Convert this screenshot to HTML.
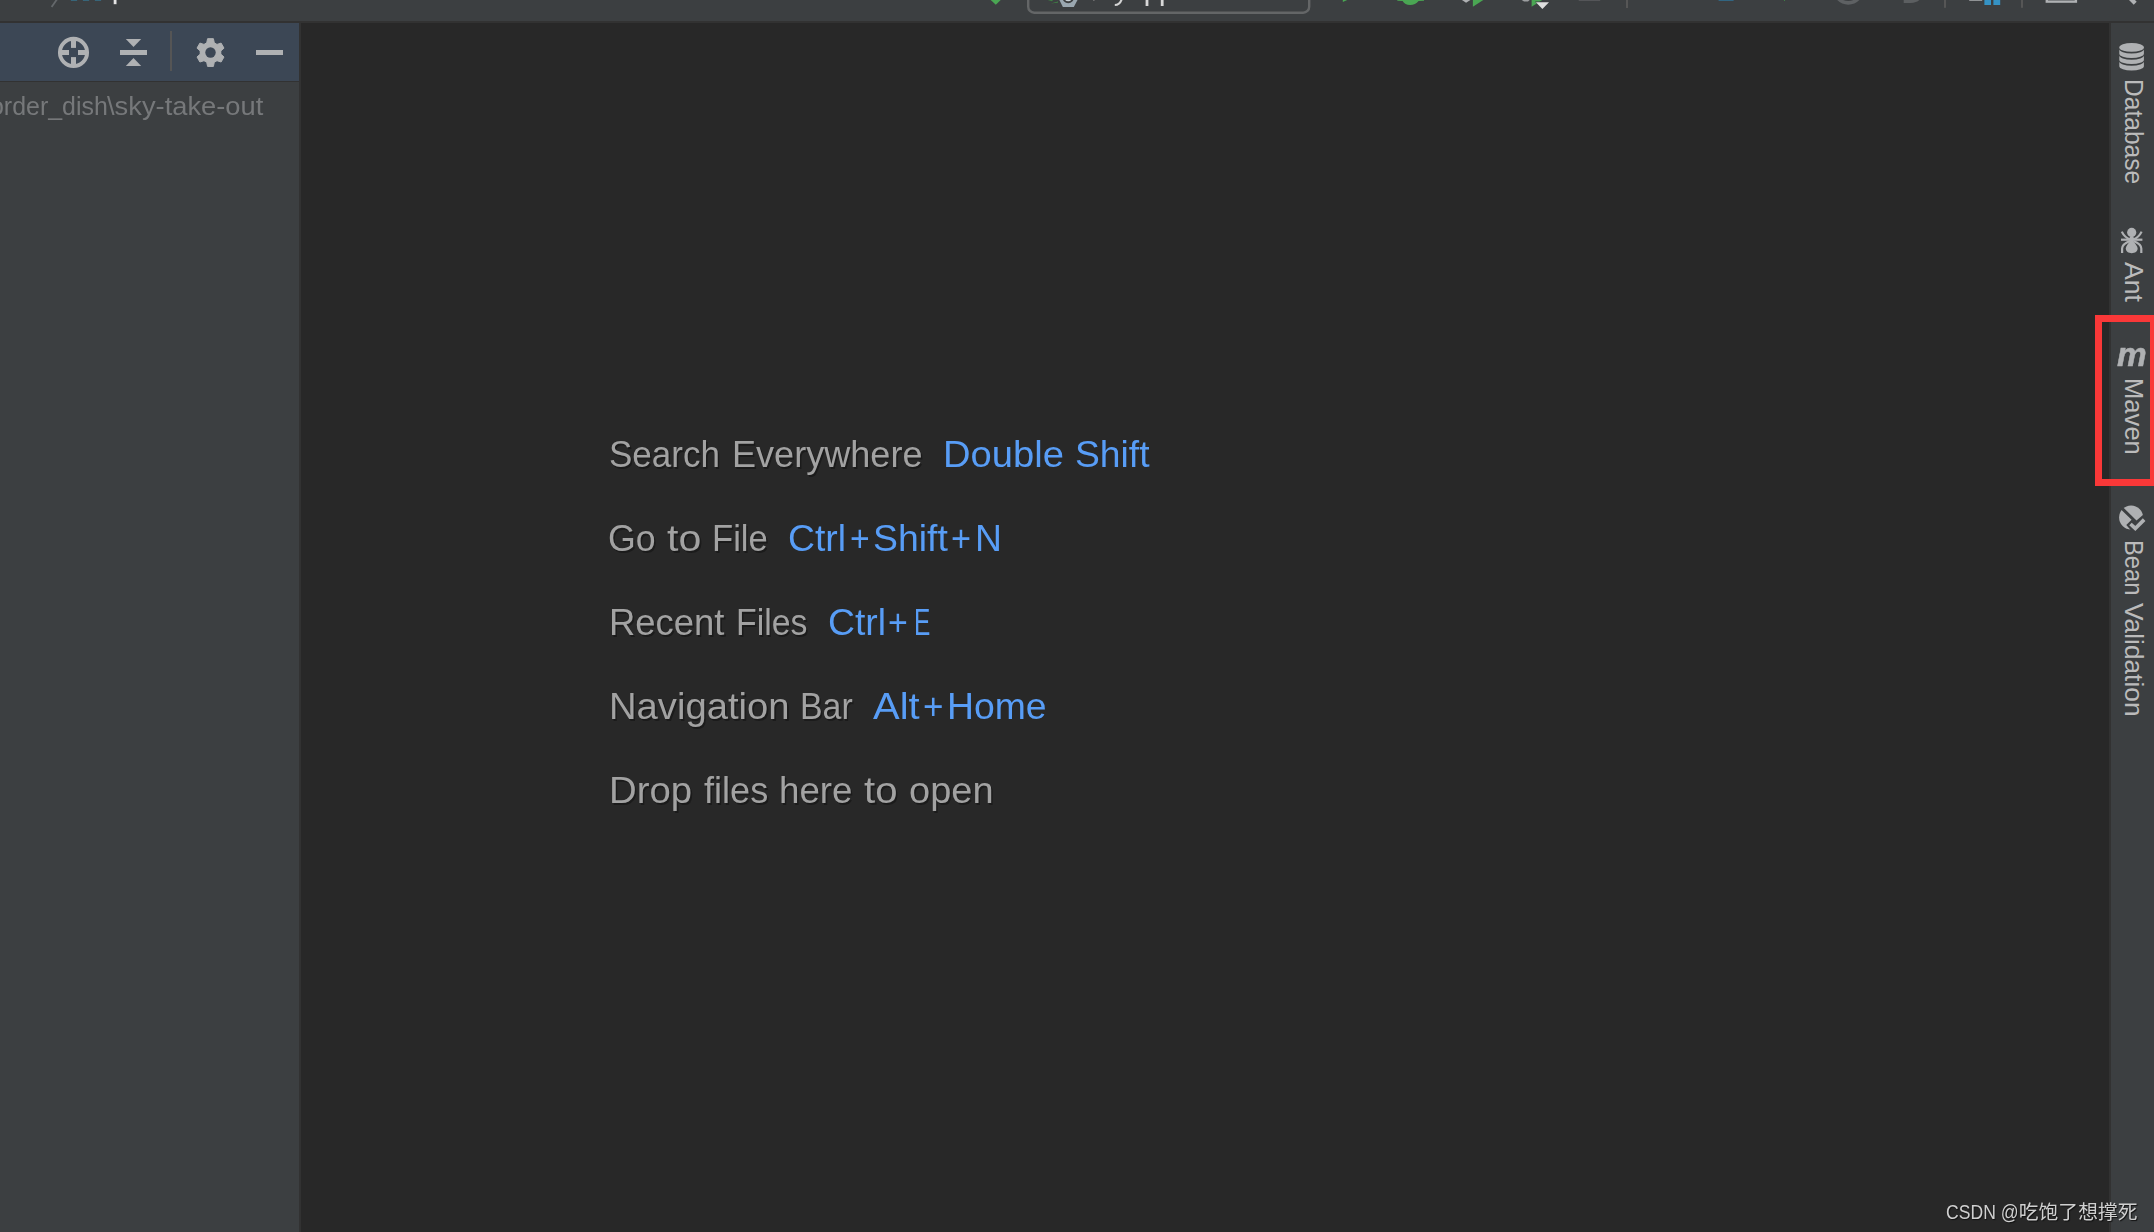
<!DOCTYPE html>
<html lang="en">
<head>
<meta charset="utf-8">
<title>IDE - Maven tool window</title>
<style>
html,body{margin:0;padding:0;}
body{width:2154px;height:1232px;background:#282828;position:relative;overflow:hidden;
  font-family:"Liberation Sans","Noto Sans CJK SC",sans-serif;}
.abs{position:absolute;}
#topbar{left:0;top:0;width:2154px;height:21px;background:#3c3f41;overflow:hidden;}
#topline{left:0;top:21px;width:2154px;height:2px;background:#323232;}
#side{left:0;top:23px;width:299px;height:1209px;background:#3c3f41;overflow:hidden;}
#sidehead{left:0;top:0;width:299px;height:58px;background:#3c4755;}
#sideheadline{left:0;top:58px;width:299px;height:1px;background:#323232;}
#sideborder{left:299px;top:23px;width:2px;height:1209px;background:#323232;}
#stripeborder{left:2109px;top:23px;width:2px;height:1209px;background:#323232;}
#stripe{left:2111px;top:23px;width:43px;height:1209px;background:#3c3f41;}
/* center hints */
.hint{position:absolute;white-space:nowrap;font-size:36px;line-height:40px;height:40px;color:#a2a2a2;
  text-shadow:1.5px 1.5px 0 #1b1b1b;transform-origin:0 0;}
.key{color:#589df6;text-shadow:none;}
/* vertical stripe labels */
.vt{position:absolute;white-space:nowrap;font-size:26px;line-height:32px;height:32px;color:#bbbbbb;
  transform-origin:0 0;transform:rotate(90deg);}
</style>
</head>
<body>
<div id="topbar" class="abs">
<svg class="abs" style="left:0;top:0;" width="2154" height="21" viewBox="0 0 2154 21">
<!-- left fragments -->
<path d="M57.2,-1 L51.6,7" stroke="#64686b" stroke-width="1.8" fill="none"/>
<rect x="70.9" y="0" width="6.2" height="0.9" fill="#376a80"/>
<rect x="82.9" y="0" width="6.2" height="0.9" fill="#376a80"/>
<rect x="94.9" y="0" width="6.2" height="0.9" fill="#376a80"/>
<rect x="113.2" y="0" width="3.8" height="4.3" fill="#6a6d70"/><rect x="113.9" y="0" width="2.4" height="4.1" fill="#e4e4e4"/>
<!-- build hammer tip -->
<path d="M990.7,0 L1000.7,0 L995.8,4.7Z" fill="#4aa653"/>
<!-- run configuration combo -->
<rect x="1028.2" y="-12" width="281" height="24.7" rx="6" ry="6" fill="none" stroke="#646667" stroke-width="2.4"/>
<path d="M1047.8,0 L1053,0.2 L1052,1.2Z M1051,3.6 L1058,1.4 L1058,2.6Z" fill="#3f8f45"/>
<path d="M1059.4,0 L1062.9,7 L1073.8,7 L1077.5,0Z" fill="#9aa7b0"/>
<circle cx="1068.2" cy="-2.6" r="4.8" fill="#c9d0d5" stroke="#3c3f41" stroke-width="2"/>
<rect x="1093" y="0" width="1.6" height="0.8" fill="#777"/>
<path d="M1121.8,-1 C1120.5,3 1118.5,5 1114.8,5" stroke="#d4d4d4" stroke-width="2.1" fill="none"/>
<rect x="1145.6" y="0" width="2.8" height="6" fill="#d8d8d8"/>
<rect x="1160.8" y="0" width="2.8" height="6" fill="#d8d8d8"/>
<!-- run/debug icons bottoms -->
<path d="M1342.8,0 L1347.2,0 L1342.8,2.1Z" fill="#4aa653"/>
<path d="M1397.3,0 L1424,0 L1424,0.8 L1418.6,0.9 C1416.5,3.6 1413.6,4.9 1410.1,4.9 C1406.6,4.9 1404.2,3.6 1402.6,0.9 L1397.3,0.8Z" fill="#4aa653"/>
<path d="M1461.9,0 L1470.4,0 L1466.1,2.7Z" fill="#afb1b3"/>
<path d="M1472.9,0 L1483.3,0 L1472.9,6.7Z" fill="#4aa653"/>
<path d="M1521.7,0 L1529.7,0 L1528,1.5 L1524,1.5Z" fill="#9c9ea0"/>
<path d="M1531.6,0 L1542.2,0 L1531.6,6.7Z" fill="#4aa653"/>
<path d="M1535.0,1.6 L1549.8,1.6 L1542.4,9.6Z" fill="#3c3f41"/>
<path d="M1535.9,2.3 L1549.0,2.3 L1542.4,8.9Z" fill="#dedede"/>
<rect x="1578.7" y="0" width="21.5" height="0.8" fill="#5a5c5e"/>
<rect x="1626" y="0" width="2" height="8" fill="#565656"/>
<rect x="1718.6" y="0" width="15" height="0.8" fill="#2f7091"/>
<rect x="1784" y="0" width="1" height="0.8" fill="#3f8f45"/>
<!-- stop (disabled) etc -->
<circle cx="1848.3" cy="-11" r="13.9" fill="none" stroke="#5e6163" stroke-width="3.6"/>
<path d="M1903.7,0 L1903.7,2.9 L1910.5,2.9 C1914.5,2.9 1917.8,1.8 1919.3,0Z" fill="#5c5f61"/>
<rect x="1944" y="0" width="2" height="7.8" fill="#565656"/>
<rect x="1969.2" y="0" width="13" height="0.9" fill="#9a9da0"/>
<rect x="1984.4" y="0" width="6.6" height="5" fill="#3592c4"/>
<rect x="1993.4" y="0" width="6.8" height="5" fill="#3592c4"/>
<rect x="2021" y="0" width="2" height="7.8" fill="#565656"/>
<rect x="2045.6" y="0" width="31.5" height="2.8" fill="#afb1b3"/>
<rect x="2048" y="0" width="26.7" height="0.9" fill="#777a7c"/>
<path d="M2127,-5 L2135.2,3.2" stroke="#afb1b3" stroke-width="4.2" fill="none"/>
</svg>
</div>
<div id="topline" class="abs"></div>
<div id="side" class="abs">
  <div id="sidehead" class="abs"></div>
  <div id="sideheadline" class="abs"></div>
</div>
<div id="sideborder" class="abs"></div>
<div id="stripeborder" class="abs"></div>
<div id="stripe" class="abs"></div>
<div id="hints">
<div class="hint" style="left:608.7px;top:433.5px;transform:scale(0.9730,1.03);">Search</div>
<div class="hint" style="left:731.7px;top:433.5px;transform:scale(1.0021,1.03);">Everywhere</div>
<div class="hint key" style="left:943.2px;top:433.5px;transform:scale(1.0595,1.03);">Double</div>
<div class="hint key" style="left:1075.2px;top:433.5px;transform:scale(1.0352,1.03);">Shift</div>

<div class="hint" style="left:608.3px;top:517.5px;transform:scale(0.9935,1.03);">Go</div>
<div class="hint" style="left:666.8px;top:517.5px;transform:scale(1.1414,1.03);">to</div>
<div class="hint" style="left:712.3px;top:517.5px;transform:scale(0.9618,1.03);">File</div>
<div class="hint key" style="left:788.3px;top:517.5px;transform:scale(1.0377,1.03);">Ctrl</div>
<div class="hint key" style="left:849.6px;top:517.5px;transform:scale(0.9368,1.03);">+</div>
<div class="hint key" style="left:873.1px;top:517.5px;transform:scale(1.0380,1.03);">Shift</div>
<div class="hint key" style="left:951.3px;top:517.5px;transform:scale(0.9526,1.03);">+</div>
<div class="hint key" style="left:975.2px;top:517.5px;transform:scale(1.0364,1.03);">N</div>

<div class="hint" style="left:609.0px;top:601.5px;transform:scale(1.0125,1.03);">Recent</div>
<div class="hint" style="left:735.5px;top:601.5px;transform:scale(0.9397,1.03);">Files</div>
<div class="hint key" style="left:827.7px;top:601.5px;transform:scale(1.0377,1.03);">Ctrl</div>
<div class="hint key" style="left:888.4px;top:601.5px;transform:scale(0.9421,1.03);">+</div>
<div class="hint key" style="left:913.5px;top:601.5px;transform:scale(0.6810,1.03);">E</div>

<div class="hint" style="left:608.9px;top:685.5px;transform:scale(1.0614,1.03);">Navigation</div>
<div class="hint" style="left:800.3px;top:685.5px;transform:scale(0.9407,1.03);">Bar</div>
<div class="hint key" style="left:872.6px;top:685.5px;transform:scale(1.1095,1.03);">Alt</div>
<div class="hint key" style="left:922.5px;top:685.5px;transform:scale(0.9737,1.03);">+</div>
<div class="hint key" style="left:947.4px;top:685.5px;transform:scale(1.0376,1.03);">Home</div>

<div class="hint" style="left:609.0px;top:769.5px;transform:scale(1.0653,1.03);">Drop</div>
<div class="hint" style="left:703.6px;top:769.5px;transform:scale(1.0032,1.03);">files</div>
<div class="hint" style="left:779.1px;top:769.5px;transform:scale(1.0203,1.03);">here</div>
<div class="hint" style="left:863.9px;top:769.5px;transform:scale(1.1138,1.03);">to</div>
<div class="hint" style="left:909.4px;top:769.5px;transform:scale(1.0558,1.03);">open</div>
</div>
<svg class="abs" style="left:0;top:23px;" width="299" height="58" viewBox="0 23 299 58">
<g fill="#afb1b3" stroke="none">
<!-- locate -->
<circle cx="73.5" cy="52.4" r="13.6" fill="none" stroke="#afb1b3" stroke-width="3.9"/>
<rect x="71" y="38.5" width="5" height="9.4"/>
<rect x="71" y="57.1" width="5" height="9.4"/>
<rect x="59.5" y="50" width="9.5" height="5"/>
<rect x="78" y="50" width="9.5" height="5"/>
<!-- collapse -->
<rect x="120" y="50" width="27" height="5"/>
<path d="M125.8,39.1 L141.2,39.1 L133.5,47.1Z"/>
<path d="M125.8,66 L141.2,66 L133.5,58Z"/>
<!-- gear -->
<path fill-rule="evenodd" stroke="#afb1b3" stroke-width="1.0" stroke-linejoin="round" d="M206.70,42.86 L207.60,38.65 L213.40,38.65 L214.30,42.86 L216.99,44.41 L221.09,43.09 L223.99,48.11 L220.79,51.00 L220.79,54.10 L223.99,56.99 L221.09,62.01 L216.99,60.69 L214.30,62.24 L213.40,66.45 L207.60,66.45 L206.70,62.24 L204.01,60.69 L199.91,62.01 L197.01,56.99 L200.21,54.10 L200.21,51.00 L197.01,48.11 L199.91,43.09 L204.01,44.41Z"/>
<circle cx="210.5" cy="52.55" r="10.3"/>
<circle cx="210.5" cy="52.55" r="5.2" fill="#3c4755"/>
<!-- minus -->
<rect x="256" y="50" width="27" height="5"/>
</g>
<rect x="170" y="31" width="2" height="40" fill="#555555"/>
</svg>
<div class="abs" id="sidetxtA" style="left:-10.4px;top:90px;transform:scaleX(0.959);font-size:26px;line-height:32px;color:#76787a;white-space:nowrap;transform-origin:0 0;">order_dish</div>
<div class="abs" id="sidetxtB" style="left:107.2px;top:90px;transform:scaleX(1.05);font-size:26px;line-height:32px;color:#76787a;white-space:nowrap;transform-origin:0 0;">\sky-take-out</div>
<!--CENTER-->
<div class="vt" id="v1" style="left:2149.8px;top:78.8px;transform:rotate(90deg) scaleX(0.945);">Database</div>
<div class="vt" id="v2" style="left:2149.8px;top:262.2px;transform:rotate(90deg) scaleX(1.024);">Ant</div>
<div class="vt" id="v3" style="left:2149.8px;top:378.0px;transform:rotate(90deg) scaleX(0.985);">Maven</div>
<div class="vt" id="v4" style="left:2149.8px;top:539.7px;transform:rotate(90deg) scaleX(0.912);">Bean</div>
<div class="vt" id="v5" style="left:2149.8px;top:602.9px;transform:rotate(90deg) scaleX(1.011);">Validation</div>
<svg class="abs" style="left:2111px;top:23px;" width="43" height="700" viewBox="2111 23 43 700">
<g fill="#afb1b3" stroke="none">
<!-- database -->
<ellipse cx="2131.6" cy="47.4" rx="12.3" ry="4.4"/>
<path d="M2119.3,49.1 A12.3,4.4 0 0 0 2143.9,49.1 L2143.9,53.8 A12.3,4.3 0 0 1 2119.3,53.8Z"/>
<path d="M2119.3,55.3 A12.3,4.4 0 0 0 2143.9,55.3 L2143.9,59.9 A12.3,4.2 0 0 1 2119.3,59.9Z"/>
<path d="M2119.3,61.3 A12.3,4.4 0 0 0 2143.9,61.3 L2143.9,66.3 A12.3,4.3 0 0 1 2119.3,66.3Z"/>
<!-- ant -->
<g transform="translate(2110,220)">
<circle cx="21.7" cy="12.4" r="4.6"/>
<ellipse cx="21.7" cy="19.2" rx="2.2" ry="3.2"/>
<path d="M21.7,20 C23.5,21.5 27.6,25.5 27.6,28.6 C27.6,31.7 25,33.2 21.7,33.2 C18.4,33.2 15.8,31.7 15.8,28.6 C15.8,25.5 19.9,21.5 21.7,20Z"/>
<g fill="none" stroke="#afb1b3" stroke-width="2.2" stroke-linecap="butt">
<path d="M11,19.7 L32.4,19.7"/>
<path d="M20.5,19.5 Q14.5,17.5 11.8,11.6"/>
<path d="M22.9,19.5 Q28.9,17.5 31.6,11.6"/>
<path d="M20,21 Q12.2,24 12.1,28.5 L12.1,33"/>
<path d="M23.4,21 Q31.2,24 31.3,28.5 L31.3,33"/>
</g>
</g>
<!-- bean validation -->
<g transform="translate(2116,502)">
<clipPath id="beanclip"><circle cx="15.1" cy="15.6" r="12"/></clipPath>
<g clip-path="url(#beanclip)">
<path d="M-2.2,-3.9 L20.5,18.6 L32.5,8.1 L32.5,-4 L-2.2,-4Z"/>
<path d="M-2.4,0.35 L15.6,17.7 L10.26,23.1 L14.0,27.3 L17.7,31.5 L17.7,34 L-3,34 L-3,0.35Z"/>
</g>
<path d="M14.45,22.0 L19.3,26.45 L28.15,17.65" fill="none" stroke="#afb1b3" stroke-width="3.7" stroke-linejoin="miter"/>
</g>
</g>
</svg>
<div class="abs" id="mvn" style="left:2117px;top:332.2px;font-size:34px;line-height:44px;font-weight:bold;font-style:italic;color:#afb1b3;-webkit-text-stroke:0.5px #afb1b3;transform-origin:0 0;transform:scaleX(0.98);">m</div>
<!--STRIPE-->
<div class="abs" id="redbox" style="left:2095px;top:315px;width:48px;height:156.6px;border:7px solid #fa3838;"></div>

<div class="abs" id="wm1" style="filter:grayscale(1);left:1945.8px;top:1197.8px;transform:scaleX(0.88);font-size:20px;line-height:28px;color:#d0d0d0;text-shadow:1px 1px 1px #111;white-space:nowrap;transform-origin:0 0;">CSDN @</div>
<div class="abs" id="wm2" style="filter:grayscale(1);left:2018.8px;top:1197.8px;font-size:19.8px;line-height:28px;color:#d0d0d0;text-shadow:1px 1px 1px #111;white-space:nowrap;transform-origin:0 0;">吃饱了想撑死</div>

</body>
</html>
